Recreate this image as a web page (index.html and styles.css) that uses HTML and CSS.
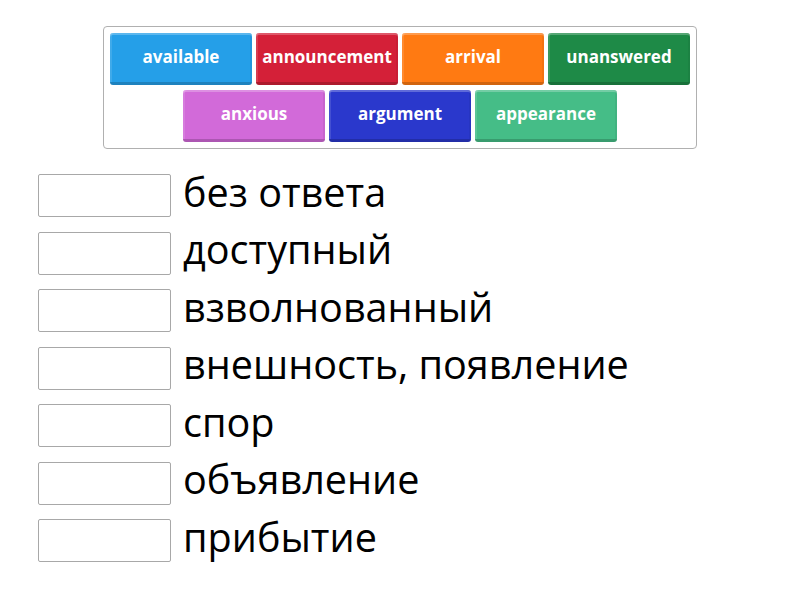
FILE: index.html
```html
<!DOCTYPE html>
<html>
<head>
<meta charset="utf-8">
<link rel="stylesheet" href="styles.css">
</head>
<body>
<div class="page">
  <div class="bank">
    <div class="bank-row">
      <div class="tile blue">available</div>
      <div class="tile red">announcement</div>
      <div class="tile orange">arrival</div>
      <div class="tile green">unanswered</div>
    </div>
    <div class="bank-row">
      <div class="tile pink">anxious</div>
      <div class="tile navy">argument</div>
      <div class="tile teal">appearance</div>
    </div>
  </div>
  <div class="rows">
    <div class="row"><div class="slot"></div><div class="word">без ответа</div></div>
    <div class="row"><div class="slot"></div><div class="word">доступный</div></div>
    <div class="row"><div class="slot"></div><div class="word">взволнованный</div></div>
    <div class="row"><div class="slot"></div><div class="word">внешность, появление</div></div>
    <div class="row"><div class="slot"></div><div class="word">спор</div></div>
    <div class="row"><div class="slot"></div><div class="word">объявление</div></div>
    <div class="row"><div class="slot"></div><div class="word">прибытие</div></div>
  </div>
</div>
</body>
</html>
```
FILE: styles.css
```css
html, body {
  margin: 0;
  padding: 0;
  background: #fff;
}
body {
  font-family: "Open Sans", "Noto Sans", sans-serif;
  width: 800px;
  height: 600px;
  overflow: hidden;
}
.page {
  padding-top: 26px;
}
.bank {
  width: 580px;
  margin-left: 103px;
  padding: 6px;
  border: 1px solid #b0b0b0;
  border-radius: 4px;
  display: flex;
  flex-direction: column;
  gap: 5px;
}
.bank-row {
  display: flex;
  justify-content: center;
  gap: 4px;
}
.tile {
  box-sizing: border-box;
  width: 142px;
  height: 52px;
  border-radius: 3px;
  color: #fff;
  font-weight: 700;
  font-size: 17px;
  display: flex;
  align-items: center;
  justify-content: center;
  padding-bottom: 2px;
  border-bottom: 3px solid rgba(0,0,0,0.18);
  box-shadow: inset 0 2px 0 rgba(255,255,255,0.25), inset 2px 0 0 rgba(255,255,255,0.12), inset -2px 0 0 rgba(0,0,0,0.05);
}
.blue { background: #259fe8; }
.red { background: #d42038; }
.orange { background: #ff7a12; }
.green { background: #1e8a47; }
.pink { background: #d26ad9; }
.navy { background: #2a38cc; }
.teal { background: #45bd87; }
.rows {
  margin-top: 25px;
  display: flex;
  flex-direction: column;
  gap: 14.5px;
}
.row {
  display: flex;
  align-items: center;
  height: 43px;
  padding-left: 38px;
}
.slot {
  box-sizing: border-box;
  width: 133px;
  height: 43px;
  border: 1px solid #a8a8a8;
  border-radius: 2px;
  background: #fff;
}
.word {
  margin-left: 12px;
  font-size: 39.6px;
  color: #000;
  line-height: 43px;
  margin-top: -7px;
}
```
